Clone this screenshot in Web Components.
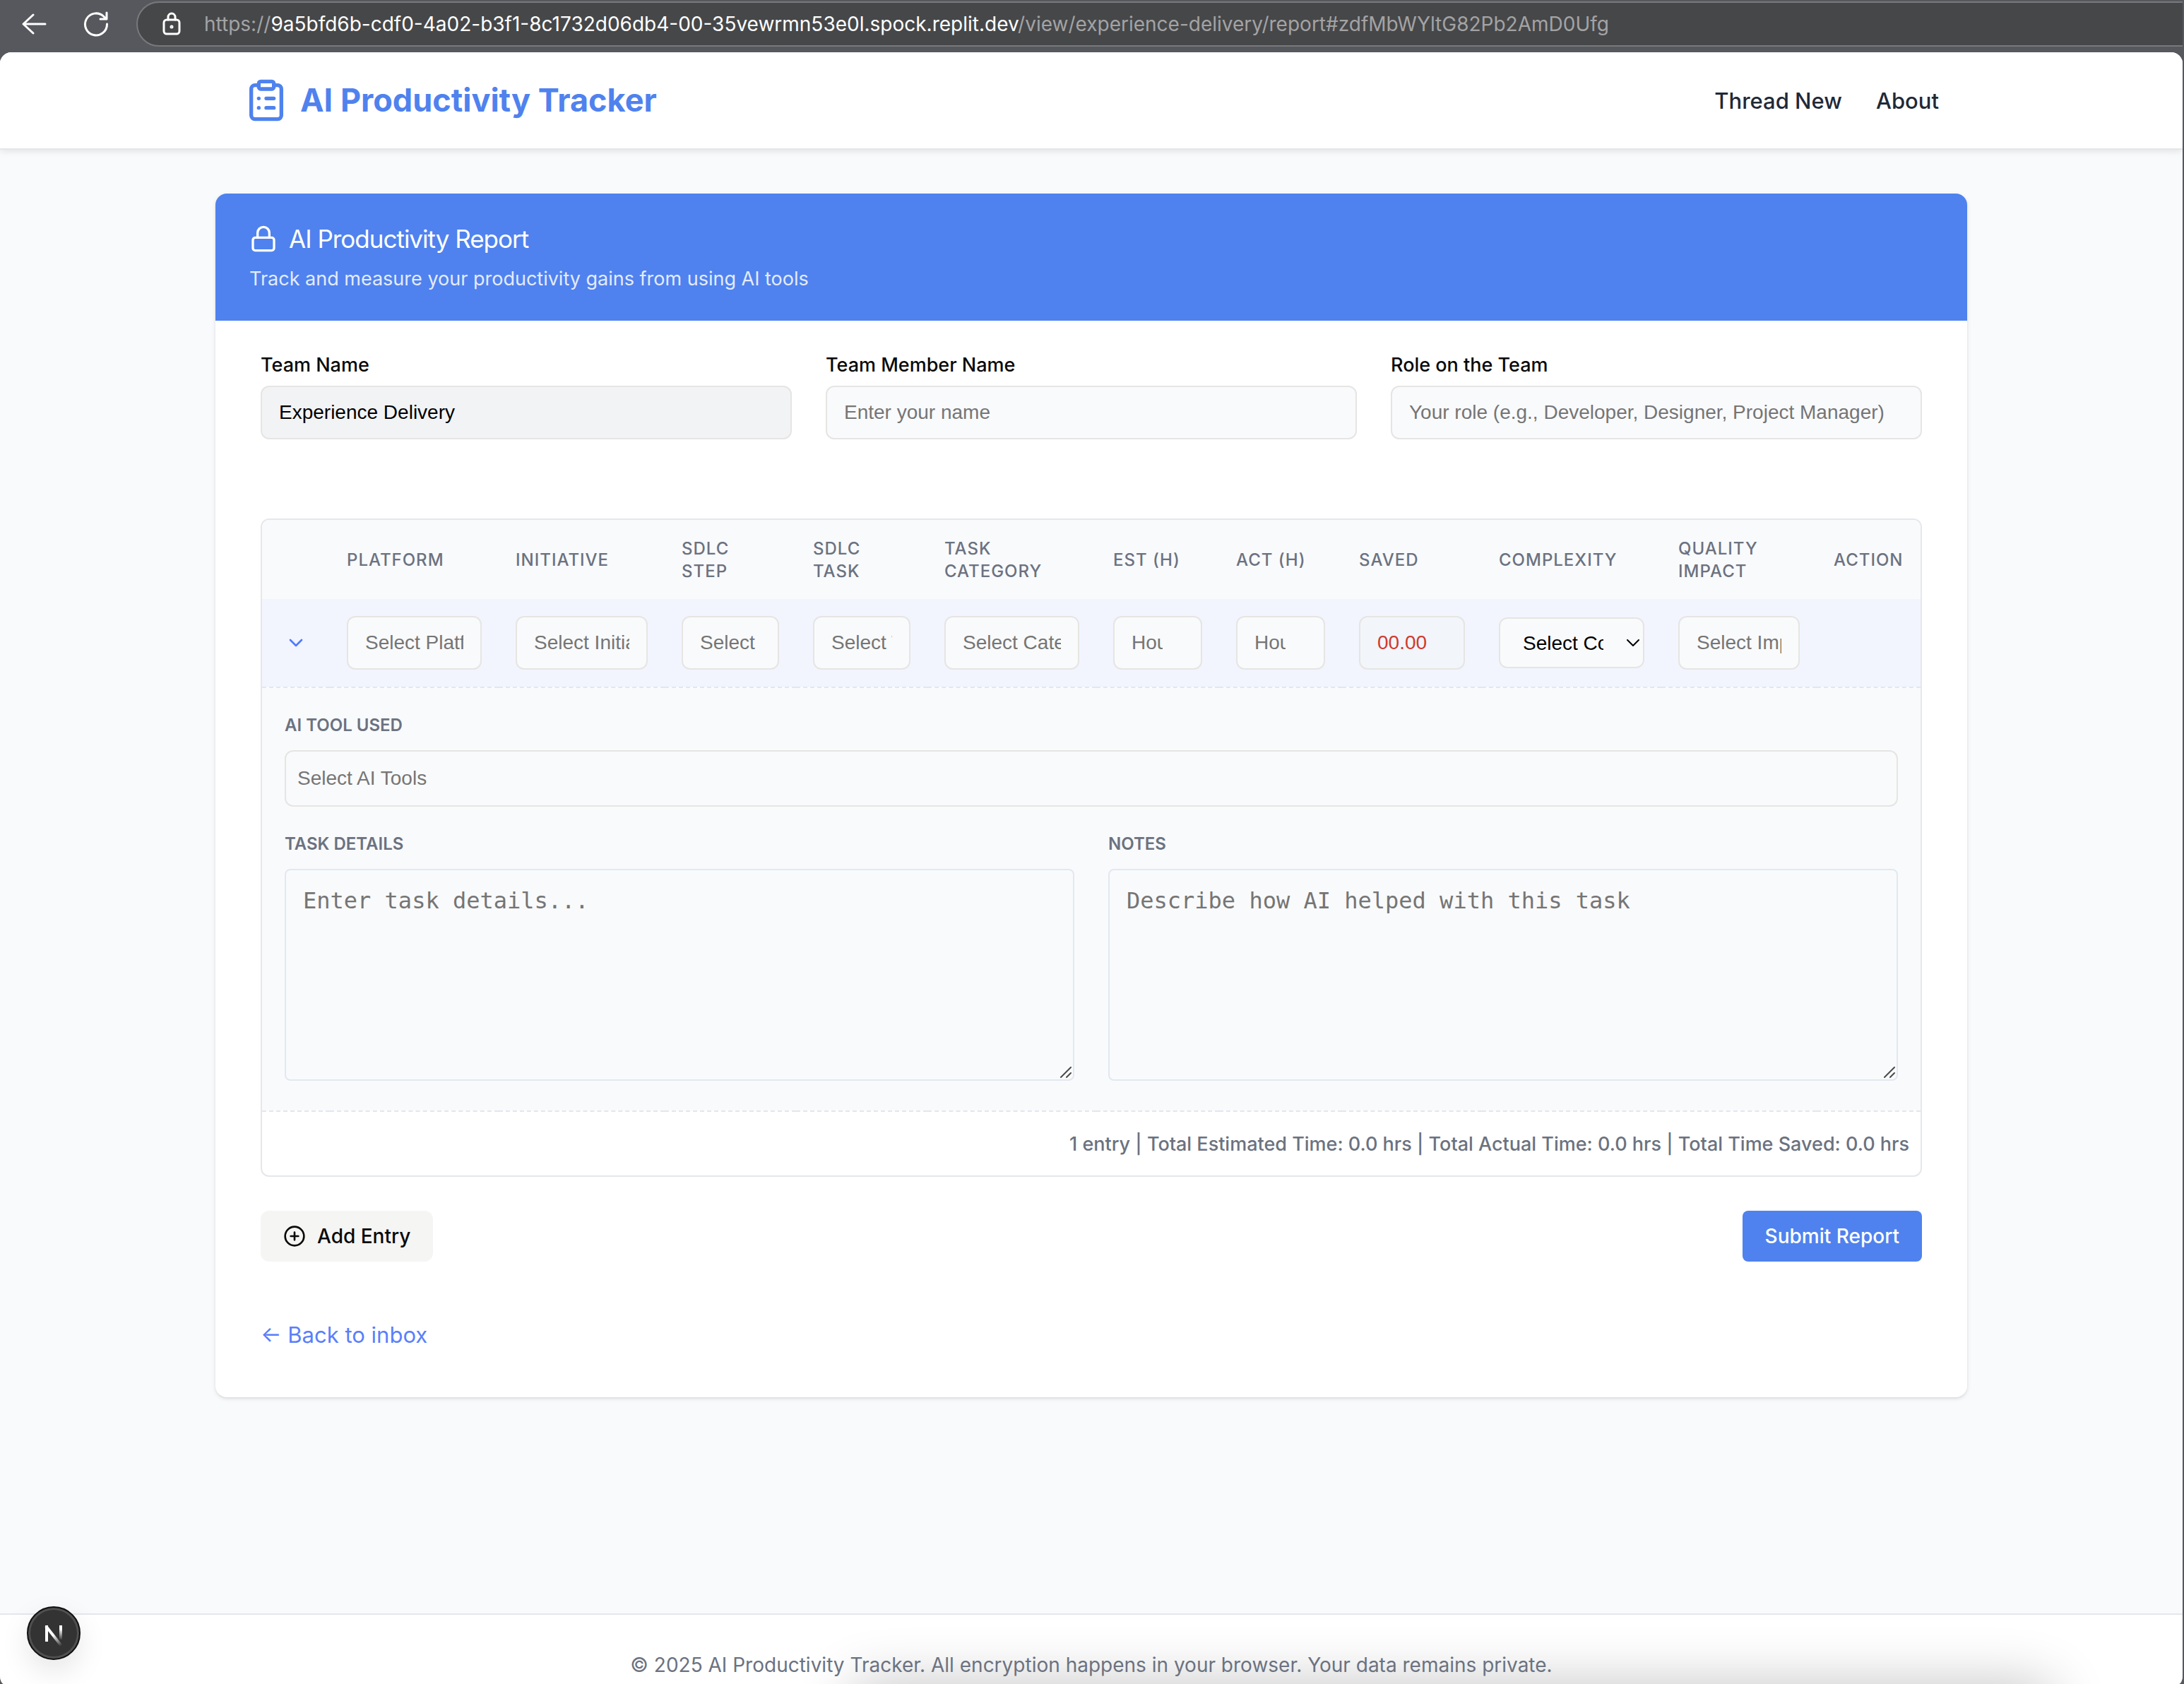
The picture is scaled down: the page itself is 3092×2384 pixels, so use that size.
<!DOCTYPE html>
<html lang="en">
<head>
<meta charset="utf-8">
<title>AI Productivity Tracker</title>
<style>
  :root {
    --blue: #4f82ee;
    --link: #5a7ffb;
    --muted: #6b7280;
    --line: #e5e7eb;
    --field-line: #e6e5e3;
    --surface: #f9fafc;
    --ui: Inter, "Liberation Sans", sans-serif;
    --control: "Liberation Sans", Arial, sans-serif;
    --mono: "DejaVu Sans Mono", monospace;
  }
  html, body { height: 100%; }
  body { margin: 0; background: #57585d; font-family: var(--ui); font-size: 28px; color: #0a0a0a; }
</style>
</head>
<body>
<tracker-app></tracker-app>

<script>
const define = (name, html, setup) => {
  const template = document.createElement('template');
  template.innerHTML = '<style>*{box-sizing:border-box}</style>' + html;
  customElements.define(name, class extends HTMLElement {
    constructor() {
      super();
      this.attachShadow({ mode: 'open' }).append(template.content.cloneNode(true));
    }
    connectedCallback() { if (setup) setup(this, this.shadowRoot); }
  });
};

define('browser-toolbar', `
  <style>
    :host { display: flex; align-items: center; height: 74px; padding: 0 0 6px 24px; overflow: hidden; color: #fff; }
    button { display: grid; padding: 0; border: 0; background: none; color: inherit; }
    .reload { margin-left: 40px; }
    svg { display: block; fill: none; stroke: currentColor; stroke-width: 3; stroke-linecap: round; stroke-linejoin: round; }
    .address { flex: 1; display: flex; align-items: center; gap: 32px; height: 64px; margin: 0 -40px 0 33px; padding-left: 34px;
      border: 2px solid #78797b; border-radius: 32px; background: #464749; }
    .url { color: #a3a3a4; font-size: 28px; line-height: 36px; white-space: nowrap; }
    b { color: #fff; font-weight: 400; }
  </style>
  <button aria-label="Back"><svg width="48" height="48" viewBox="0 0 48 48"><path d="M40 24H9M23 11 9 24l14 13"/></svg></button>
  <button class="reload" aria-label="Reload"><svg width="48" height="48" viewBox="0 0 48 48"><path d="M39.500 24a15.500 15.500 0 1 1-5-11l4 4M39 8v9h-9"/></svg></button>
  <div class="address">
    <svg width="28" height="34" viewBox="0 0 28 34"><rect x="3" y="11" width="22" height="20" rx="4"/><path d="M9 11V7a5 5 0 0 1 10 0v4"/><circle cx="14" cy="21" r="1"/></svg>
    <div class="url">https://<b>9a5bfd6b-cdf0-4a02-b3f1-8c1732d06db4-00-35vewrmn53e0l.spock.replit.dev</b>/view/experience-delivery/report#zdfMbWYltG82Pb2AmD0Ufg</div>
  </div>`);

define('site-header', `
  <style>
    :host { display: block; position: relative; background: #fff; box-shadow: 0 2px 0 #e4e7e6, 0 4px 10px rgba(0,0,0,.1); }
    .bar { display: flex; align-items: center; justify-content: space-between; height: 136px; max-width: 2480px; margin: 0 auto; padding: 0 40px; }
    a { color: inherit; text-decoration: none; }
    .brand { display: flex; align-items: center; gap: 16px; color: var(--blue); font-size: 45px; line-height: 64px; font-weight: 700; }
    svg { display: block; fill: none; stroke: currentColor; stroke-width: 2; stroke-linecap: round; stroke-linejoin: round; }
    nav { display: flex; gap: 48px; padding-top: 2px; color: #1f2937; font-size: 31px; line-height: 48px; font-weight: 500; }
  </style>
  <div class="bar">
    <a class="brand" href="#home">
      <svg width="64" height="64" viewBox="0 0 24 24"><rect width="8" height="4" x="8" y="2" rx="1"/><path d="M16 4h2a2 2 0 0 1 2 2v14a2 2 0 0 1-2 2H6a2 2 0 0 1-2-2V6a2 2 0 0 1 2-2h2M12 11h4M12 16h4M8 11h.01M8 16h.01"/></svg>
      <span>AI Productivity Tracker</span>
    </a>
    <nav><a href="#new">Thread New</a><a href="#about">About</a></nav>
  </div>`);

define('report-card', `
  <style>
    :host { display: block; max-width: 2480px; margin: 0 auto; border-radius: 16px; background: #fff; overflow: hidden;
      box-shadow: 0 2px 6px rgba(0,0,0,.1), 0 2px 4px -2px rgba(0,0,0,.1); }
    header { padding: 40px 48px 39px; background: var(--blue); color: #fff; }
    h1 { display: flex; align-items: center; gap: 16px; margin: 0 0 13px; font-size: 35px; line-height: 48px; font-weight: 400; letter-spacing: -1px; }
    svg { display: block; fill: none; stroke: currentColor; stroke-width: 2; stroke-linecap: round; stroke-linejoin: round; }
    p { margin: 0; font-size: 27px; line-height: 40px; color: rgba(255,255,255,.86); }
    .body { padding: 49px 64px 64px; }
  </style>
  <header>
    <h1><svg width="40" height="40" viewBox="0 0 24 24"><rect width="18" height="11" x="3" y="11" rx="2"/><path d="M7 11V7a5 5 0 0 1 10 0v4"/></svg><slot name="title"></slot></h1>
    <p><slot name="subtitle"></slot></p>
  </header>
  <div class="body"><slot></slot></div>`);

define('text-field', `
  <style>
    :host { display: grid; gap: 15px; min-width: 0; }
    label { font-size: 27px; line-height: 28px; font-weight: 500; }
    input { width: 100%; height: 76px; padding: 0 24px; border: 2px solid var(--field-line); border-radius: 12px;
      background: var(--surface); color: #000; font: 28px var(--control); }
    input[readonly] { background: #f2f3f5; }
    input::placeholder { color: #757575; opacity: 1; }
  </style>
  <label for="field"></label><input id="field" type="text">`,
  (host, root) => {
    const input = root.querySelector('input');
    root.querySelector('label').textContent = host.getAttribute('label');
    input.placeholder = host.getAttribute('placeholder') || '';
    input.value = host.getAttribute('value') || '';
    input.readOnly = host.hasAttribute('readonly');
  });

define('entry-table', `
  <style>
    :host { display: block; border: 2px solid var(--line); border-radius: 12px; background: #fff; overflow: hidden; }
    table { width: 100%; table-layout: fixed; border-collapse: collapse; }
    th { height: 112px; padding: 2px 0 0 24px; background: var(--surface); color: var(--muted); text-align: left;
      font-size: 24px; line-height: 32px; font-weight: 500; letter-spacing: 1px; }
    td { padding: 0; }
    .entry td { height: 125px; padding: 24px; background: #f2f5fe; }
    tbody tr { border-bottom: 2px dashed #e2e6ee; }
    .entry .toggle { padding: 0; }
    .toggle button { display: grid; margin: 0 auto; padding: 0; border: 0; background: none; color: #4f7bff; }
    svg { display: block; fill: none; stroke: currentColor; stroke-width: 2; stroke-linecap: round; stroke-linejoin: round; }
    input, select, textarea { display: block; width: 100%; border: 2px solid var(--field-line); border-radius: 12px;
      background: #f9fafb; color: #000; font: 28px var(--control); }
    input { height: 76px; padding: 0 24px; }
    ::placeholder { color: #757575; opacity: 1; }
    .hours { padding-right: 54px; }
    .saved { background: #f2f5f9; color: #cf3a30; }
    .choice, .note { display: grid; align-items: center; }
    .choice > *, .note > * { grid-area: 1 / 1; }
    select { appearance: none; height: 72px; padding: 0 56px 0 32px; }
    .choice svg { justify-self: end; margin-right: 4px; pointer-events: none; color: #000; }
    .details { padding: 37px 32px 42px; background: var(--surface); }
    .pair { display: grid; grid-template-columns: 1fr 1fr; gap: 48px; margin-top: 37px; }
    label { display: block; margin-bottom: 19px; color: var(--muted); font-size: 24px; line-height: 32px; font-weight: 600; }
    .tools { height: 80px; padding: 0 16px; }
    textarea { height: 300px; padding: 19px 24px; border-color: #e2e8f0; border-radius: 8px; font: 32px/48px var(--mono); resize: none; }
    .note svg { place-self: end; margin: 0 2px 2px 0; color: #4b4b4b; pointer-events: none; }
    tfoot td { height: 91px; padding: 1px 16px 0 0; color: var(--muted); font-size: 27px; line-height: 40px; font-weight: 500; text-align: right; }
  </style>
  <table>
    <colgroup>
      <col style="width:96px"><col style="width:239px"><col style="width:235px"><col style="width:186px"><col style="width:186px"><col style="width:239px">
      <col style="width:174px"><col style="width:174px"><col style="width:198px"><col style="width:254px"><col style="width:220px"><col style="width:147px">
    </colgroup>
    <thead>
      <tr><th></th><th>PLATFORM</th><th>INITIATIVE</th><th>SDLC<br>STEP</th><th>SDLC<br>TASK</th><th>TASK<br>CATEGORY</th><th>EST (H)</th><th>ACT (H)</th><th>SAVED</th><th>COMPLEXITY</th><th>QUALITY<br>IMPACT</th><th>ACTION</th></tr>
    </thead>
    <tbody>
      <tr class="entry">
        <td class="toggle"><button aria-label="Collapse entry"><svg width="32" height="32" viewBox="0 0 24 24"><path d="m6 9 6 6 6-6"/></svg></button></td>
        <td><input aria-label="Platform" placeholder="Select Platform"></td>
        <td><input aria-label="Initiative" placeholder="Select Initiative"></td>
        <td><input aria-label="SDLC step" placeholder="Select Step"></td>
        <td><input aria-label="SDLC task" placeholder="Select Task"></td>
        <td><input aria-label="Task category" placeholder="Select Category"></td>
        <td><input class="hours" aria-label="Estimated hours" placeholder="Hours"></td>
        <td><input class="hours" aria-label="Actual hours" placeholder="Hours"></td>
        <td><input class="saved" aria-label="Hours saved" value="00.00" readonly></td>
        <td><div class="choice"><select aria-label="Complexity"><option>Select Complexity</option></select><svg width="24" height="24" viewBox="0 0 24 24"><path d="m4 8 8 8 8-8"/></svg></div></td>
        <td><input aria-label="Quality impact" placeholder="Select Impact"></td>
        <td></td>
      </tr>
      <tr>
        <td colspan="12">
          <div class="details">
            <label for="tools">AI TOOL USED</label>
            <input class="tools" id="tools" placeholder="Select AI Tools">
            <div class="pair">
              <div>
                <label for="task">TASK DETAILS</label>
                <div class="note"><textarea id="task" placeholder="Enter task details..."></textarea><svg width="20" height="20" viewBox="0 0 20 20"><path d="M3 17 17 3M11 17l6-6"/></svg></div>
              </div>
              <div>
                <label for="notes">NOTES</label>
                <div class="note"><textarea id="notes" placeholder="Describe how AI helped with this task"></textarea><svg width="20" height="20" viewBox="0 0 20 20"><path d="M3 17 17 3M11 17l6-6"/></svg></div>
              </div>
            </div>
          </div>
        </td>
      </tr>
    </tbody>
    <tfoot>
      <tr><td colspan="12">1 entry | Total Estimated Time: 0.0 hrs | Total Actual Time: 0.0 hrs | Total Time Saved: 0.0 hrs</td></tr>
    </tfoot>
  </table>`);

define('report-button', `
  <style>
    :host { display: block; }
    button { display: flex; align-items: center; gap: 16px; height: 72px; padding: 0 32px; border: 0; border-radius: 12px;
      background: #f5f5f4; color: #0a0a0a; font: 500 28px/40px var(--ui); white-space: nowrap; }
    :host([primary]) button { border-radius: 8px; background: var(--blue); color: #fff; }
  </style>
  <button><slot name="icon"></slot><slot></slot></button>`);

define('report-form', `
  <style>
    :host { display: block; }
    .people { display: grid; grid-template-columns: repeat(3, 1fr); gap: 48px; margin-bottom: 112px; }
    .actions { display: flex; justify-content: space-between; margin: 48px 0 80px; }
    svg { display: block; fill: none; stroke: currentColor; stroke-width: 2; stroke-linecap: round; stroke-linejoin: round; }
    .back { display: block; width: fit-content; color: var(--link); font-size: 31px; line-height: 48px; text-decoration: none; }
  </style>
  <div class="people">
    <text-field label="Team Name" value="Experience Delivery" readonly></text-field>
    <text-field label="Team Member Name" placeholder="Enter your name"></text-field>
    <text-field label="Role on the Team" placeholder="Your role (e.g., Developer, Designer, Project Manager)"></text-field>
  </div>
  <entry-table></entry-table>
  <div class="actions">
    <report-button><svg slot="icon" width="32" height="32" viewBox="0 0 24 24"><circle cx="12" cy="12" r="10"/><path d="M8 12h8M12 8v8"/></svg>Add Entry</report-button>
    <report-button primary>Submit Report</report-button>
  </div>
  <a class="back" href="#inbox">← Back to inbox</a>`);

define('site-footer', `
  <style>
    :host { display: block; position: relative; height: 100px; padding-top: 49px; border-top: 2px solid var(--line); background: #fff; overflow: hidden; }
    .shade { position: absolute; top: 100%; left: 39%; right: 6%; height: 80px; border-radius: 24px; box-shadow: 0 0 80px rgba(0,0,0,.24); }
    p { position: relative; margin: 0; color: var(--muted); font-size: 28px; line-height: 44px; text-align: center; }
  </style>
  <div class="shade"></div>
  <p>© 2025 AI Productivity Tracker. All encryption happens in your browser. Your data remains private.</p>`);

define('dev-badge', `
  <style>
    :host { position: absolute; left: 38px; bottom: 34px; }
    button { display: grid; width: 76px; height: 76px; padding: 0; border: 2px solid #111; border-radius: 50%; background: #333;
      box-shadow: inset 0 0 0 3px #505050, 0 16px 40px rgba(0,0,0,.1); }
    svg { display: block; }
  </style>
  <button aria-label="Open developer tools">
    <svg width="72" height="72" viewBox="0 0 72 72" fill="none" stroke-width="4">
      <defs>
        <linearGradient id="slant" gradientUnits="userSpaceOnUse" x1="36" y1="38" x2="48" y2="53"><stop stop-color="#fff"/><stop offset="1" stop-color="#fff" stop-opacity="0"/></linearGradient>
        <linearGradient id="stem" gradientUnits="userSpaceOnUse" x1="0" y1="30" x2="0" y2="46"><stop stop-color="#fff"/><stop offset="1" stop-color="#fff" stop-opacity="0"/></linearGradient>
      </defs>
      <path d="M26 48V25" stroke="#fff"/><path d="m25 26 22 28" stroke="url(#slant)"/><path d="M46 25v20" stroke="url(#stem)"/>
    </svg>
  </button>`);

define('tracker-app', `
  <style>
    :host { display: flex; flex-direction: column; min-height: 100%; padding-right: 2px; }
    .page { flex: 1; display: flex; flex-direction: column; position: relative; overflow: hidden; background: var(--surface);
      border-radius: 16px 16px 6px 6px / 16px 16px 12px 12px; }
    main { flex: 1; padding: 64px 24px; }
  </style>
  <browser-toolbar></browser-toolbar>
  <div class="page">
    <site-header></site-header>
    <main>
      <report-card>
        <span slot="title">AI Productivity Report</span>
        <span slot="subtitle">Track and measure your productivity gains from using AI tools</span>
        <report-form></report-form>
      </report-card>
    </main>
    <site-footer></site-footer>
    <dev-badge></dev-badge>
  </div>`);
</script>
</body>
</html>
